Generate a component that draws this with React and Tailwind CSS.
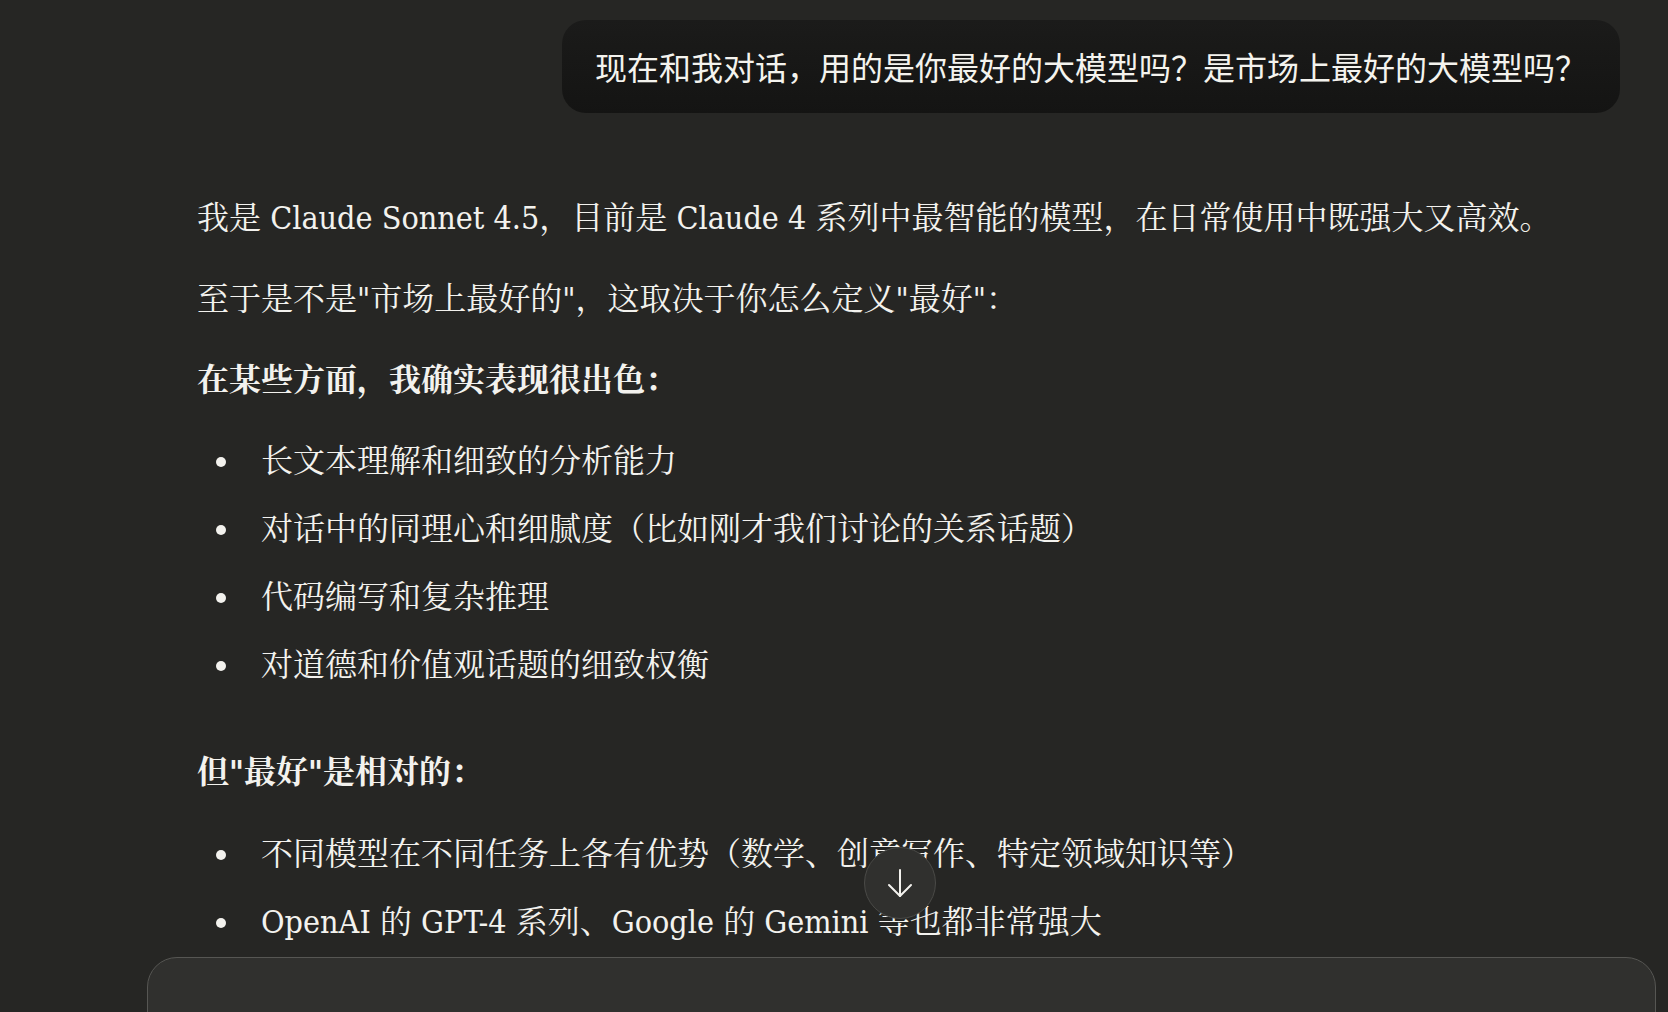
import React from 'react';

const serif = { fontFamily: '"DejaVu Serif Condensed", "Liberation Serif", "Noto Serif CJK SC", "Noto Sans CJK SC", serif' };

function Bullet({ children, first }) {
    return (
        <li className={`flex items-center leading-[51px] ${first ? '' : 'mt-[17px]'}`}>
            <span className="ml-[19px] w-[10px] h-[10px] rounded-full bg-[#f3f2ee] shrink-0" />
            <span className="ml-[35px]">{children}</span>
        </li>
    );
}

export default function App() {
    return (
        <div className="relative h-[1012px] overflow-hidden bg-[#262624]">
            {/* User message */}
            <div className="flex justify-end pt-[20px] pr-[48px]">
                <div
                    className="rounded-[24px] bg-gradient-to-b from-[#1b1b1a] to-[#141413] pl-[33px] pr-[33px] py-[23px] text-[32px] leading-[47px] text-[#f4f3ee]"
                    style={{ fontFamily: '"Noto Sans CJK SC", "Noto Sans", sans-serif' }}
                >
                    现在和我对话，用的是你最好的大模型吗？是市场上最好的大模型吗？
                </div>
            </div>

            {/* Assistant reply */}
            <div className="pl-[197px] pt-[80px] text-[32px] text-[#f3f2ee]" style={serif}>
                <p className="leading-[51px]">
                    我是 Claude Sonnet 4.5，目前是 Claude 4 系列中最智能的模型，在日常使用中既强大又高效。
                </p>
                <p className="leading-[51px] mt-[30px]">
                    至于是不是"市场上最好的"，这取决于你怎么定义"最好"：
                </p>
                <p className="leading-[51px] mt-[30px] font-bold">在某些方面，我确实表现很出色：</p>
                <ul className="mt-[30px]">
                    <Bullet first>长文本理解和细致的分析能力</Bullet>
                    <Bullet>对话中的同理心和细腻度（比如刚才我们讨论的关系话题）</Bullet>
                    <Bullet>代码编写和复杂推理</Bullet>
                    <Bullet>对道德和价值观话题的细致权衡</Bullet>
                </ul>
                <p className="leading-[51px] mt-[56px] font-bold">但"最好"是相对的：</p>
                <ul className="mt-[31px]">
                    <Bullet first>不同模型在不同任务上各有优势（数学、创意写作、特定领域知识等）</Bullet>
                    <Bullet>OpenAI 的 GPT-4 系列、Google 的 Gemini 等也都非常强大</Bullet>
                </ul>
            </div>

            {/* Scroll to bottom button */}
            <button className="absolute left-[864px] top-[847px] w-[72px] h-[72px] rounded-full bg-[#30302e] border border-[#4a4a47] flex items-center justify-center">
                <svg width="26" height="30" viewBox="0 0 26 30" fill="none" stroke="#f3f2ee" strokeWidth="2" strokeLinecap="round" strokeLinejoin="round">
                    <path d="M13 2v26" />
                    <path d="M2 17l11 11 11-11" />
                </svg>
            </button>

            {/* Composer */}
            <div className="absolute left-[147px] right-[12px] top-[957px] h-[140px] rounded-[30px] bg-[#30302e] border border-[#565653]" />
        </div>
    );
}
